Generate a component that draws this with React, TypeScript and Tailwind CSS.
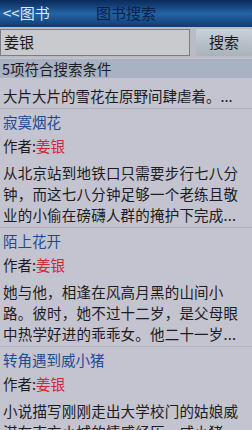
const BOOKS = [
  {
    title: "寂寞烟花",
    author: "姜银",
    lines: [
      "从北京站到地铁口只需要步行七八分",
      "钟，而这七八分钟足够一个老练且敬",
      "业的小偷在磅礴人群的掩护下完成...",
    ],
  },
  {
    title: "陌上花开",
    author: "姜银",
    lines: [
      "她与他，相逢在风高月黑的山间小",
      "路。彼时，她不过十二岁，是父母眼",
      "中热学好进的乖乖女。他二十一岁...",
    ],
  },
  {
    title: "转角遇到威小猪",
    author: "姜银",
    lines: [
      "小说描写刚刚走出大学校门的姑娘威",
      "淇在南方小城的情感经历。威小猪，",
    ],
  },
];

function BookItem({ book }: { book: (typeof BOOKS)[number] }) {
  return (
    <div className="border-t border-[#b3b3c0] px-[3px] pt-[1px] pb-[2px]">
      <div className="h-[23px] leading-[23px] text-[#1d4b93]">{book.title}</div>
      <div className="h-[29px] leading-[26px]">
        作者:<span className="text-[#d0263a]">{book.author}</span>
      </div>
      {book.lines.map((l) => (
        <div key={l} className="whitespace-nowrap tracking-[0.2px] leading-[21px]">
          {l}
        </div>
      ))}
    </div>
  );
}

export default function App() {
  return (
    <div
      className="h-[430px] w-[252px] overflow-hidden bg-[#c4c3d0] text-[14.5px] text-[#1c1c22]"
      style={{ fontFamily: '"Noto Sans CJK SC", "Noto Sans", sans-serif' }}
    >
      {/* 标题栏 */}
      <div className="relative flex h-[27px] items-center bg-gradient-to-b from-[#0a2a5a] via-[#2563a3] to-[#103c76] px-[3px]">
        <span className="text-[15px] text-[#dde6f2]">&lt;&lt;图书</span>
        <span className="absolute left-1/2 -translate-x-1/2 text-[15px] text-[#0b1f4a]">图书搜索</span>
      </div>

      {/* 搜索栏 */}
      <div className="flex h-[31px] items-center gap-[6px] bg-[#b9bcc4] py-[2px]">
        <div className="flex h-full w-[190px] items-center border border-[#7c7d84] bg-[#c9cacd] px-[3px] text-[15px] text-[#1a1a1a]">
          姜银
        </div>
        <div className="flex h-full flex-1 items-center justify-center rounded-[2px] bg-gradient-to-b from-[#c8d0d8] to-[#a9b1ba] text-[15px] text-[#1a1a1a]">
          搜索
        </div>
      </div>

      <div className="mt-[1px] h-[19px] bg-[#a9b2c2] px-[2px] leading-[19px]">5项符合搜索条件</div>

      <div className="flex h-[30px] items-center whitespace-nowrap px-[3px] pt-[5px]">
        大片大片的雪花在原野间肆虐着。...
      </div>

      {BOOKS.map((b) => (
        <BookItem key={b.title} book={b} />
      ))}
    </div>
  );
}
